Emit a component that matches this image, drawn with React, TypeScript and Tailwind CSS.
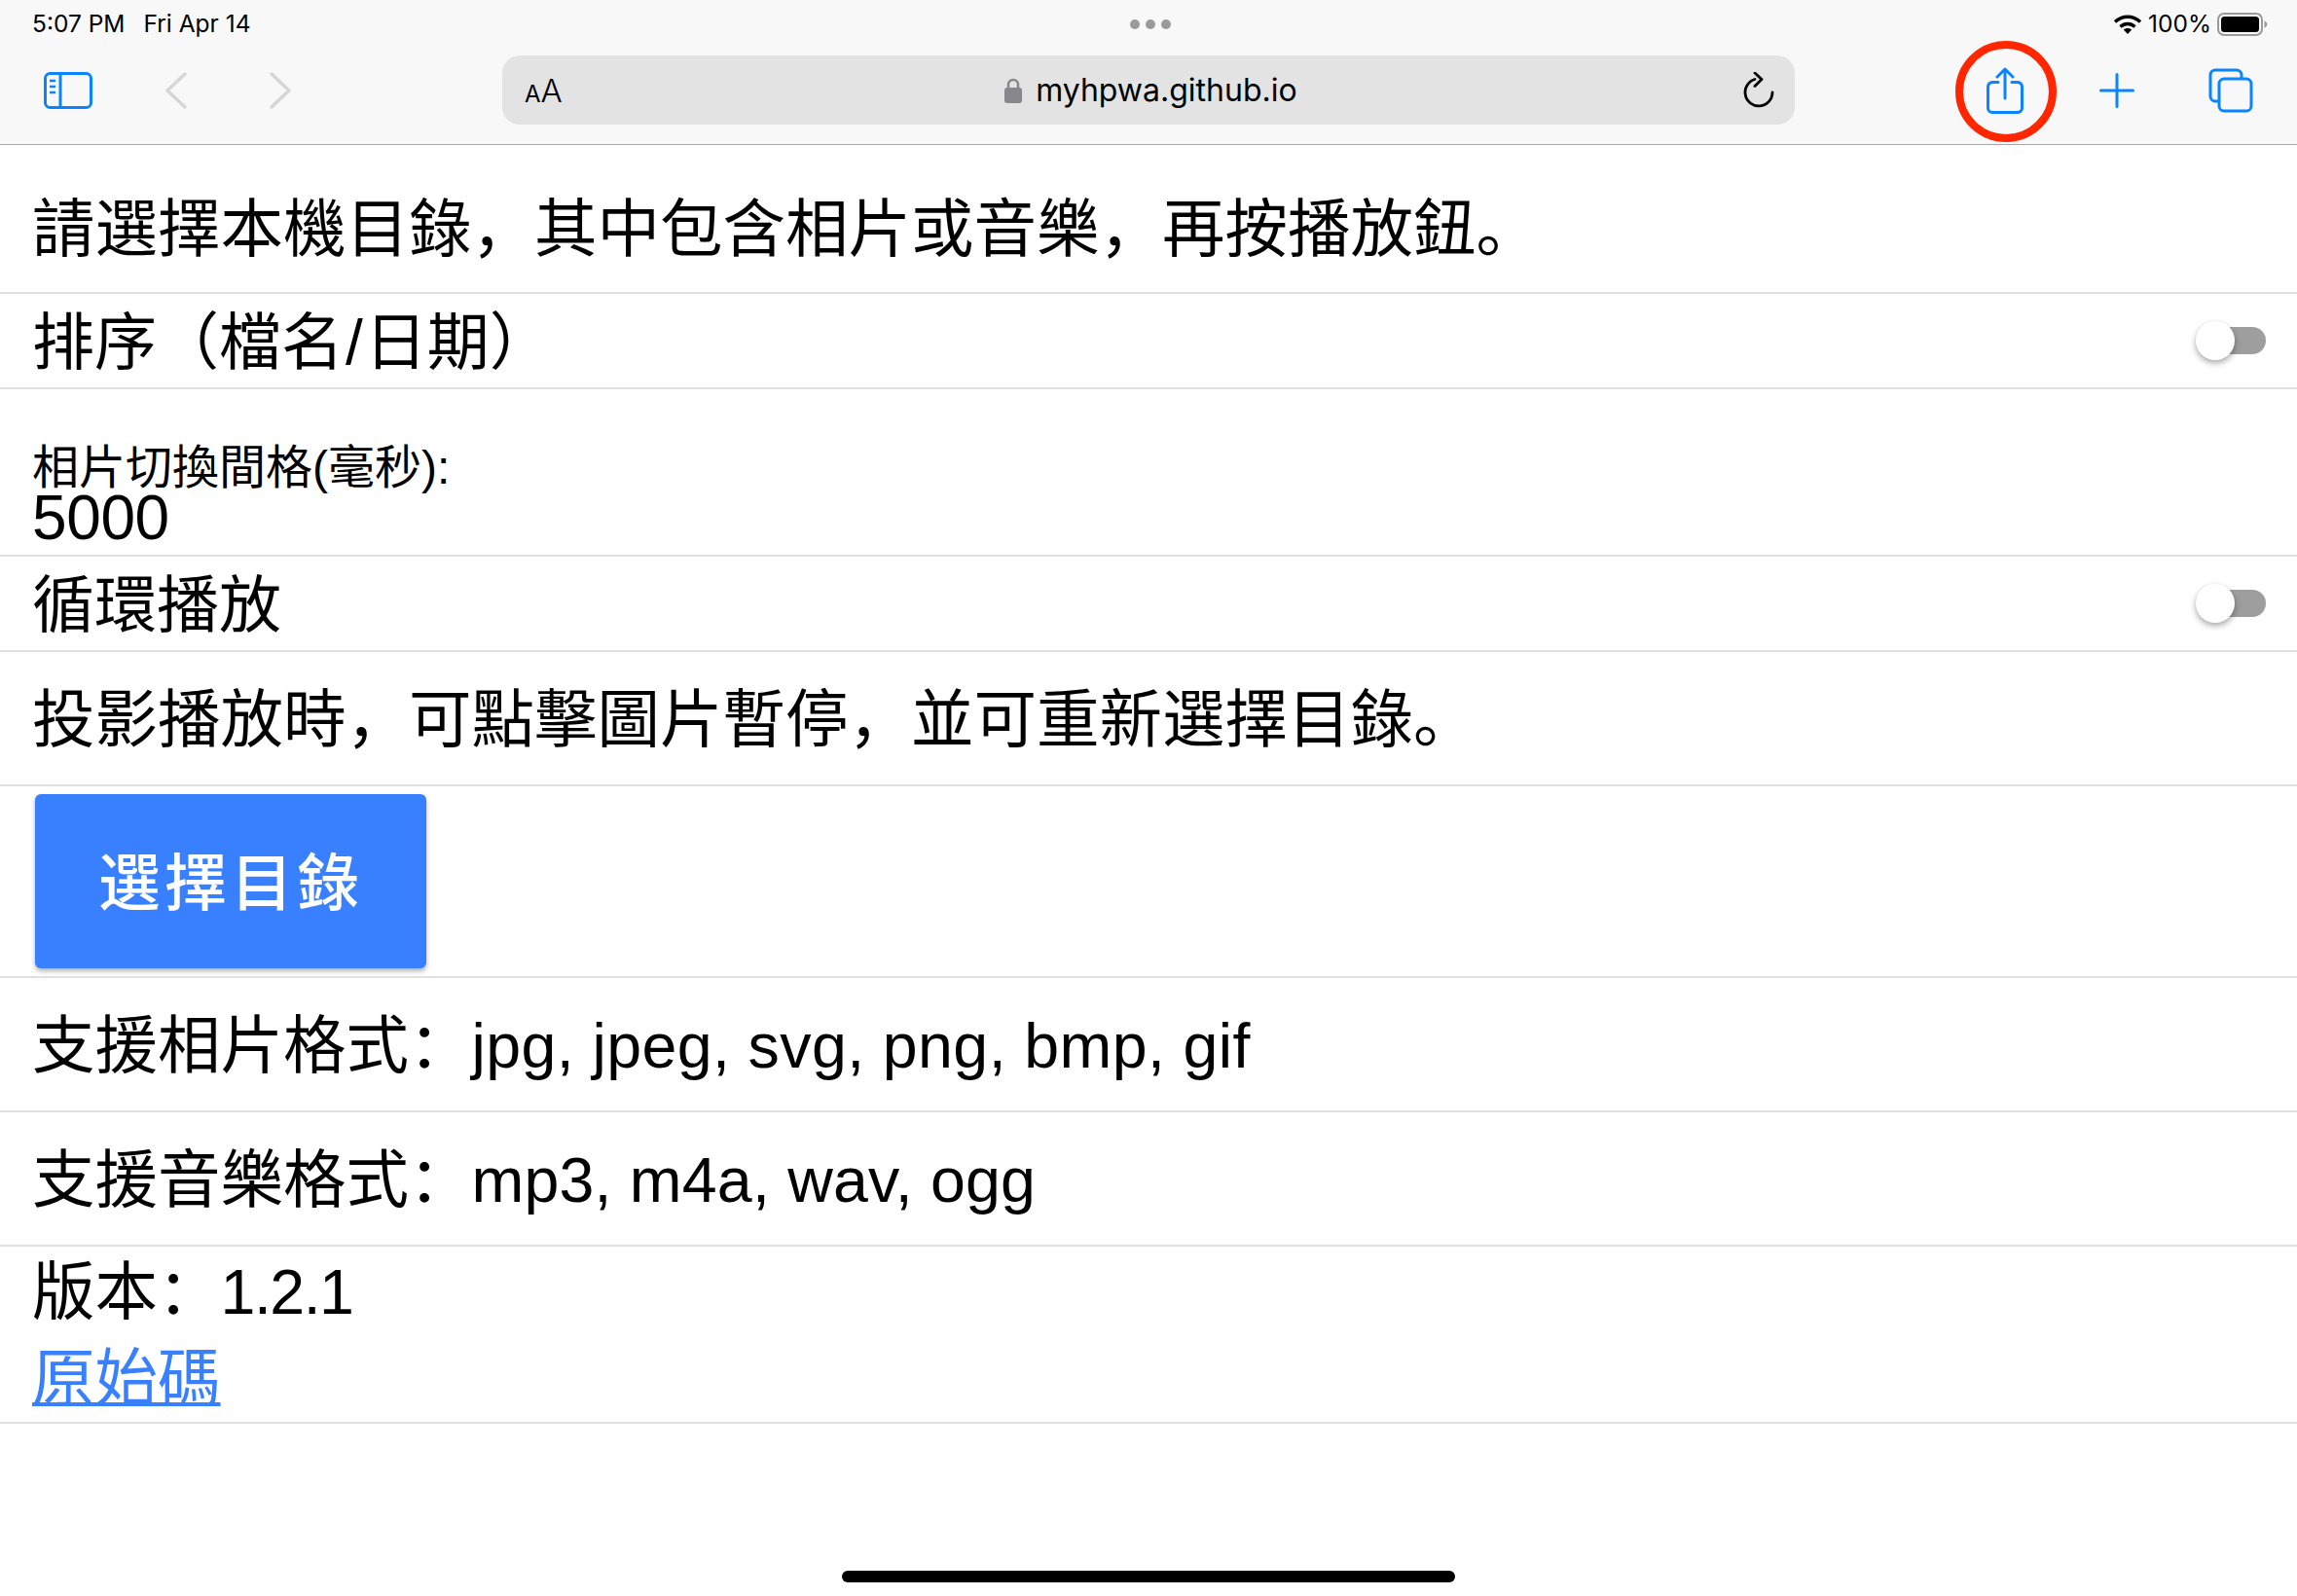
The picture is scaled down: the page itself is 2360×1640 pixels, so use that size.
const sans = "font-['Liberation_Sans','Noto_Sans_CJK_SC',sans-serif]";

function Toggle() {
  return (
    <div className="relative h-[40px] w-[72px] shrink-0">
      <div className="absolute right-0 top-[6px] h-[28px] w-[68px] rounded-full bg-[#9e9e9e]" />
      <div className="absolute left-0 top-0 h-[40px] w-[40px] rounded-full bg-white shadow-[0_3px_6px_rgba(0,0,0,0.35)]" />
    </div>
  );
}

function StatusBar() {
  return (
    <div className="flex h-[47px] items-center justify-between pl-[33px] pr-[30px] pt-[2px] font-['Inter',sans-serif] text-[24.5px] text-black">
      <div className="flex w-[300px] gap-[19px]">
        <span>5:07 PM</span>
        <span>Fri Apr 14</span>
      </div>
      <div className="flex gap-[6px]">
        <span className="h-[10px] w-[10px] rounded-full bg-[#9a9a9a]" />
        <span className="h-[10px] w-[10px] rounded-full bg-[#9a9a9a]" />
        <span className="h-[10px] w-[10px] rounded-full bg-[#9a9a9a]" />
      </div>
      <div className="flex w-[300px] items-center justify-end gap-[6px]">
        <svg width="30" height="22" viewBox="0 0 30 22" fill="none" stroke="#000" strokeWidth="3.4">
          <path d="M2 8.5C9.5 1.5 20.5 1.5 28 8.5" />
          <path d="M7.5 13.5C12 9.5 18 9.5 22.5 13.5" />
          <path d="M15 21l-4.2-4.4c2.4-2 6-2 8.4 0z" fill="#000" stroke="none" />
        </svg>
        <span>100%</span>
        <svg width="52" height="26" viewBox="0 0 52 26" fill="none">
          <rect x="1" y="2" width="45" height="22" rx="6" stroke="#9a9a9a" strokeWidth="2" />
          <rect x="4" y="5" width="39" height="16" rx="3.5" fill="#000" />
          <path d="M48.5 9.5c2 .6 2.8 2 2.8 3.500s-.8 2.900-2.800 3.500z" fill="#9a9a9a" />
        </svg>
      </div>
    </div>
  );
}

function Toolbar() {
  return (
    <div className="flex h-[101px] items-start pt-[10px]">
      <div className="flex h-[71px] w-[516px] shrink-0 items-center pl-[45px]">
        <svg width="50" height="38" viewBox="0 0 50 38" fill="none" stroke="#0a84ff" strokeWidth="3">
          <rect x="1.500" y="1.500" width="47" height="35" rx="5" />
          <path d="M17 1.500v35" />
          <path d="M6 9h6M6 15h6M6 21h6" strokeWidth="2.500" />
        </svg>
        <svg className="ml-[74px]" width="24" height="38" viewBox="0 0 24 38" fill="none" stroke="#d6d6d6" strokeWidth="3.500" strokeLinecap="round" strokeLinejoin="round">
          <path d="M21 2L3 19l18 17" />
        </svg>
        <svg className="ml-[83px]" width="24" height="38" viewBox="0 0 24 38" fill="none" stroke="#d6d6d6" strokeWidth="3.500" strokeLinecap="round" strokeLinejoin="round">
          <path d="M3 2l18 17L3 36" />
        </svg>
      </div>
      <div className="relative flex h-[71px] w-[1328px] shrink-0 items-center rounded-[18px] bg-[#e3e3e3] pl-[23px] pr-[20px]">
        <span className="flex items-baseline pt-[2px] font-['Inter',sans-serif] text-black">
          <span className="text-[24px]">A</span>
          <span className="text-[33px] font-light">A</span>
        </span>
        <div className="flex flex-1 items-center justify-center pr-[3px] font-['Inter',sans-serif] text-[32px] text-black">
          <svg className="mr-[14px]" width="18" height="26" viewBox="0 0 18 26">
            <path d="M4 11V7a5 5 0 0 1 10 0v4" fill="none" stroke="#87878c" strokeWidth="2.500" />
            <rect x="0" y="10" width="18" height="16" rx="3" fill="#87878c" />
          </svg>
          <span>myhpwa.github.io</span>
        </div>
        <svg width="34" height="38" viewBox="0 0 34 38" fill="none" stroke="#000" strokeWidth="2.800" strokeLinecap="round" strokeLinejoin="round">
          <path d="M13 7.500a14 14 0 1 0 18 13.500" />
          <path d="M13 1l7 6.500-7 7" />
        </svg>
      </div>
      <div className="flex h-[71px] flex-1 items-center pl-[197px]">
        <svg width="38" height="48" viewBox="0 0 38 48" fill="none" stroke="#0a84ff" strokeWidth="3" strokeLinecap="round" strokeLinejoin="round">
          <path d="M26 15.500h6a4.500 4.500 0 0 1 4.500 4.500v22a4.500 4.500 0 0 1-4.500 4.500H6A4.500 4.500 0 0 1 1.500 42V20A4.500 4.500 0 0 1 6 15.500h6" />
          <path d="M19 32V2M11 10l8-8 8 8" />
        </svg>
        <svg className="ml-[78px]" width="36" height="36" viewBox="0 0 36 36" fill="none" stroke="#0a84ff" strokeWidth="3" strokeLinecap="round">
          <path d="M18 1.500v33M1.500 18h33" />
        </svg>
        <svg className="ml-[76px]" width="46" height="46" viewBox="0 0 46 46" fill="none" stroke="#0a84ff" strokeWidth="3">
          <path d="M11 34H7a5 5 0 0 1-5-5V7a5 5 0 0 1 5-5h22a5 5 0 0 1 5 5v4" />
          <rect x="11" y="11" width="33" height="33" rx="5" />
        </svg>
      </div>
    </div>
  );
}

export default function App() {
  return (
    <div className={`relative flex h-[1640px] w-[2360px] flex-col overflow-hidden bg-white text-black ${sans}`}>
      <div className="shrink-0 border-b border-[#a6a6a6] bg-[#f7f8f7]">
        <StatusBar />
        <Toolbar />
      </div>

      <div className="flex h-[153px] items-center border-b-2 border-[#e0e0e0] pl-[33px] pt-[23px] text-[64.5px]">
        請選擇本機目錄，其中包含相片或音樂，再按播放鈕。
      </div>
      <div className="flex h-[98px] items-center justify-between border-b-2 border-[#e0e0e0] pl-[33px] pr-[32px] text-[64px]">
        <span className="pt-[4px]">
          排序（檔名<span className="mx-[2px]">/</span>日期）
        </span>
        <Toggle />
      </div>
      <div className="flex h-[172px] flex-col justify-end border-b-2 border-[#e0e0e0] pb-[11px] pl-[33px]">
        <div className="text-[48px] leading-[48px]">相片切換間格(毫秒):</div>
        <div className="text-[64px] leading-[54px] tracking-[-0.4px]">5000</div>
      </div>
      <div className="flex h-[98px] items-center justify-between border-b-2 border-[#e0e0e0] pl-[33px] pr-[32px] text-[64px]">
        <span className="pt-[4px]">循環播放</span>
        <Toggle />
      </div>
      <div className="flex h-[138px] items-center border-b-2 border-[#e0e0e0] pl-[33px] pt-[4px] text-[64.5px]">
        投影播放時，可點擊圖片暫停，並可重新選擇目錄。
      </div>
      <div className="flex h-[197px] items-start border-b-2 border-[#e0e0e0] pl-[36px] pt-[8px]">
        <button className="flex h-[179px] w-[402px] items-center justify-center rounded-[6px] bg-[#3880ff] pt-[4px] text-[64px] font-medium tracking-[4px] text-white shadow-[0_3px_5px_rgba(0,0,0,0.3)]">
          選擇目錄
        </button>
      </div>
      <div className="flex h-[138px] items-center border-b-2 border-[#e0e0e0] pl-[33px] pt-[4px] text-[64.5px]">
        <span>
          支援相片格式：<span className="tracking-[0.4px]">jpg, jpeg, svg, png, bmp, gif</span>
        </span>
      </div>
      <div className="flex h-[138px] items-center border-b-2 border-[#e0e0e0] pl-[33px] pt-[5px] text-[64.5px]">
        <span>
          支援音樂格式：<span className="tracking-[0.2px]">mp3, m4a, wav, ogg</span>
        </span>
      </div>
      <div className="flex h-[182px] flex-col justify-center border-b-2 border-[#e0e0e0] pl-[33px] pt-[4px] text-[64.5px] leading-[89px]">
        <div>
          版本：<span className="tracking-[-1.5px]">1.2.1</span>
        </div>
        <a className="w-fit text-[#3880ff] underline decoration-[4px]">原始碼</a>
      </div>

      <div className="flex flex-1 items-end justify-center pb-[14px]">
        <div className="h-[12px] w-[630px] rounded-full bg-black" />
      </div>

      {/* annotation drawn over the toolbar */}
      <div className="absolute left-[2009px] top-[42px] h-[104px] w-[104px] rounded-full border-[8px] border-[#ff2600]" />
    </div>
  );
}
